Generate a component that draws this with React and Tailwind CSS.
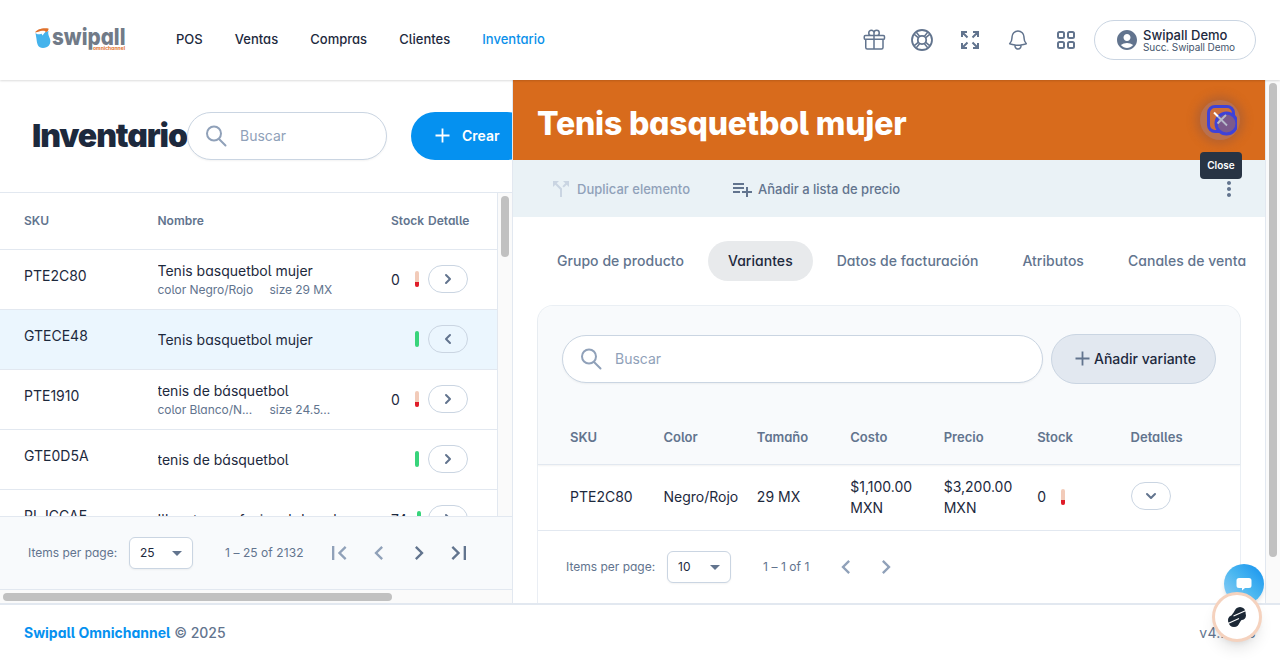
import React from "react";
import { HiOutlineGift, HiOutlineBell } from "react-icons/hi2";
import { HiChevronRight, HiChevronLeft, HiChevronDown } from "react-icons/hi";
import {
  MdAccountCircle, MdCallSplit, MdPlaylistAdd, MdMoreVert, MdArrowDropDown,
  MdFirstPage, MdLastPage, MdChevronLeft, MdChevronRight,
} from "react-icons/md";

const PLAIN = "[font-feature-settings:normal]";

function Logo() {
  return (
    <svg className="h-[28px] w-[96px] shrink-0 overflow-visible" viewBox="0 0 96 28">
      <path d="M1.500 7 C3 8.500 6 9 9 7 L14.500 5 C13.500 8 15 10 16 13 C17.500 18 14 22 9 22 C4 22 3 18 2.500 13 Z" fill="#45b3ec" />
      <path d="M1 6.500 C3 3 9 1.500 14.500 2.500 C15 4.500 13 5.500 11.500 6.500 C12 4 8 4.300 3.500 6 Z" fill="#e0712b" />
      <path d="M7 6.500 L8.500 9.500 L11.500 5.500 Z" fill="#fff" />
      <text x="18" y="18.500" textLength="73.500" lengthAdjust="spacingAndGlyphs" fontSize="23.500" fontWeight="800" fill="#717b88" className="[font-feature-settings:'cv11']">swipall</text>
      <text x="59" y="23.600" textLength="32" lengthAdjust="spacingAndGlyphs" fontSize="4.500" fontWeight="700" fill="#e0712b" className="[font-feature-settings:'cv11']">omnichannel</text>
    </svg>
  );
}

function SearchIcon() {
  return (
    <svg className="size-6 shrink-0 text-slate-400" viewBox="0 0 24 24" fill="none" stroke="currentColor" strokeWidth="2" strokeLinecap="round">
      <path d="M21.500 21.500l-6-6m1.500-6a7 7 0 11-14 0 7 7 0 0114 0z" />
    </svg>
  );
}

function LifebuoyIcon() {
  return (
    <svg className="size-6" viewBox="0 0 24 24" fill="none" stroke="currentColor" strokeWidth="1.800">
      <circle cx="12" cy="12" r="10" />
      <circle cx="12" cy="12" r="4.200" />
      <path d="M4.300 6.300l4.200 3.500M6.300 4.300l3.500 4.200M19.700 6.300l-4.200 3.500M17.700 4.300l-3.500 4.200M4.300 17.700l4.200-3.500M6.300 19.700l3.500-4.200M19.700 17.700l-4.200-3.500M17.700 19.700l-3.500-4.200" strokeWidth="1.500" />
    </svg>
  );
}

function ExpandIcon() {
  return (
    <svg className="size-6" viewBox="0 0 24 24" fill="none" stroke="currentColor" strokeWidth="2">
      <path d="M4 9V4h5M4 4l5.500 5.500M15 4h5v5M20 4l-5.500 5.500M4 15v5h5M4 20l5.500-5.500M20 15v5h-5M20 20l-5.500-5.500" />
    </svg>
  );
}

function Search({ className }) {
  return (
    <div className={`flex h-12 items-center rounded-full border border-slate-300 bg-white pl-4 shadow-xs ${className}`}>
      <SearchIcon />
      <span className={`ml-3 text-sm text-slate-400 ${PLAIN}`}>Buscar</span>
    </div>
  );
}

function Plus({ className }) {
  return (
    <svg className={className} viewBox="0 0 16 16" fill="none" stroke="currentColor" strokeWidth="1.800">
      <path d="M7.500 .5v14M.5 7.500h14" />
    </svg>
  );
}

function StockBar({ full }) {
  return full ? (
    <div className="h-4 w-1 rounded-xs bg-[#38d47b]" />
  ) : (
    <div className="flex h-4 w-1 flex-col justify-end overflow-hidden rounded-xs bg-[#f2cbb9]">
      <div className="h-[5px] bg-[#df1c29]" />
    </div>
  );
}

function Pill({ icon: Icon }) {
  return (
    <div className="flex h-7 w-10 items-center justify-center rounded-full border border-slate-300 text-slate-500">
      <Icon className="size-5" />
    </div>
  );
}

const NAV = ["POS", "Ventas", "Compras", "Clientes"];

const ROWS = [
  { sku: "PTE2C80", name: "Tenis basquetbol mujer", sub: ["color Negro/Rojo", "size 29 MX"], stock: "0" },
  { sku: "GTECE48", name: "Tenis basquetbol mujer", full: true, selected: true },
  { sku: "PTE1910", name: "tenis de básquetbol", sub: ["color Blanco/N...", "size 24.5..."], stock: "0" },
  { sku: "GTE0D5A", name: "tenis de básquetbol", full: true },
  { sku: "PLJCCAE", name: "Illuvetas profesional de color y mundo", stock: "74", full: true },
];

function Header() {
  return (
    <header className="relative z-20 flex h-20 shrink-0 items-center bg-white pl-[34px] pr-6 shadow-[0_1px_2px_rgba(0,0,0,0.14)]">
      <Logo />
      <nav className="ml-[46px] flex gap-8 text-[13px] font-medium tracking-[0.020px] text-slate-800">
        {NAV.map((n) => <span key={n}>{n}</span>)}
        <span className="text-[#0990ea]">Inventario</span>
      </nav>
      <div className="ml-auto flex items-center gap-6 text-slate-500">
        <HiOutlineGift className="size-6" />
        <LifebuoyIcon />
        <ExpandIcon />
        <HiOutlineBell className="size-6" />
        <svg className="size-6" viewBox="0 0 24 24" fill="none" stroke="currentColor" strokeWidth="2">
          <rect x="4" y="4" width="6" height="6" rx="1.500" /><rect x="14" y="4" width="6" height="6" rx="1.500" />
          <rect x="4" y="14" width="6" height="6" rx="1.500" /><rect x="14" y="14" width="6" height="6" rx="1.500" />
        </svg>
      </div>
      <div className={`ml-4 flex h-10 w-[162px] items-center rounded-full border border-slate-300 pl-5 ${PLAIN}`}>
        <MdAccountCircle className="size-6 shrink-0 text-slate-500" />
        <div className="ml-1 flex flex-col">
          <span className="text-[13px] leading-[14px] font-medium text-slate-800">Swipall Demo</span>
          <span className="text-[10px] leading-[11px] tracking-[-0.100px] text-slate-600">Succ. Swipall Demo</span>
        </div>
      </div>
    </header>
  );
}

function Row({ r }) {
  return (
    <div className={`grid h-[60px] shrink-0 grid-cols-[133.500px_233.500px_24px_13px_1fr] border-b border-slate-200 pl-6 text-sm text-slate-800 ${r.selected ? "bg-[#ebf6fe]" : ""}`}>
      <div className="pt-4 leading-5">{r.sku}</div>
      <div className="flex flex-col justify-center">
        <div className={`overflow-hidden leading-5 whitespace-nowrap ${r.sub ? "" : "pt-px"}`}>{r.name}</div>
        {r.sub && (
          <div className="flex gap-4 text-xs leading-[17px] tracking-[-0.050px] text-slate-500">
            <span className="w-24 whitespace-nowrap">{r.sub[0]}</span>
            <span>{r.sub[1]}</span>
          </div>
        )}
      </div>
      <div className="flex items-center">{r.stock}</div>
      <div className={`flex items-center pb-0.5 ${r.stock === "74" ? "pl-0.5" : ""}`}>
        <StockBar full={r.full} />
      </div>
      <div className="flex items-center pb-0.5">
        <Pill icon={r.selected ? HiChevronLeft : HiChevronRight} />
      </div>
    </div>
  );
}

function PageSize({ n }) {
  return (
    <div className="ml-3 flex h-8 w-16 items-center justify-between rounded-md border border-slate-300 bg-white pl-2.5 pr-[3px] text-xs text-slate-800 shadow-xs">
      {n}
      <MdArrowDropDown className="size-6 text-slate-500" />
    </div>
  );
}

function LeftPanel() {
  return (
    <section className="flex w-[513px] shrink-0 flex-col overflow-hidden border-r border-slate-200">
      <div className="flex h-[113px] shrink-0 items-center border-b border-slate-200 pl-8">
        <h1 className="w-[155px] shrink-0 text-[32px] leading-none font-black tracking-[-1.100px] text-slate-800">Inventario</h1>
        <Search className="w-[200px] shrink-0" />
        <div className={`ml-6 flex h-12 w-[120px] shrink-0 items-center rounded-full bg-[#0591f0] pl-6 text-sm font-semibold text-white ${PLAIN}`}>
          <Plus className="size-4" />
          <span className="ml-[11px]">Crear</span>
        </div>
      </div>
      <div className="flex h-[323px] shrink-0 overflow-hidden">
        <div className="flex w-[497px] flex-col">
          <div className="grid h-[57px] shrink-0 grid-cols-[133.500px_233.500px_37px_1fr] items-center border-b border-slate-200 pl-6 text-xs font-semibold text-slate-500">
            <span>SKU</span><span>Nombre</span><span>Stock</span><span>Detalle</span>
          </div>
          {ROWS.map((r) => <Row key={r.sku} r={r} />)}
        </div>
        <div className="flex w-[15px] justify-center border-l border-slate-200 bg-[#fafafa] pt-[3px]">
          <div className="h-[61px] w-2 rounded-full bg-[#c1c1c1]" />
        </div>
      </div>
      <div className="flex h-[74px] shrink-0 items-center border-y border-slate-200 bg-slate-50 pl-7 text-xs text-slate-500">
        <span className="w-[89px] whitespace-nowrap">Items per page:</span>
        <PageSize n="25" />
        <span className="ml-8 w-[88px] tracking-[0.070px] whitespace-nowrap">1 – 25 of 2132</span>
        <div className="ml-3 flex gap-3">
          <MdFirstPage className="size-7 text-slate-400" />
          <MdChevronLeft className="size-7 text-slate-400" />
          <MdChevronRight className="size-7 text-slate-500" />
          <MdLastPage className="size-7 text-slate-500" />
        </div>
      </div>
      <div className="flex flex-1 items-start bg-[#fafafa] pt-[3px] pl-[3px]">
        <div className="h-2 w-[389px] rounded-full bg-[#c1c1c1]" />
      </div>
    </section>
  );
}

const TABS = ["Grupo de producto", "Variantes", "Datos de facturación", "Atributos", "Canales de venta"];

function Detail() {
  return (
    <section className="flex flex-1 overflow-hidden">
      <div className="flex w-[752px] shrink-0 flex-col overflow-hidden">
        <div className="flex h-20 shrink-0 items-center justify-between bg-[#d86b1c] pr-[25px] pl-[25px]">
          <h2 className="-ml-px pt-2 text-[32px] leading-none font-extrabold tracking-[-0.200px] text-white">Tenis basquetbol mujer</h2>
          <div className="relative flex size-10 items-center justify-center rounded-full bg-[#b9704e] shadow-[0_0_10px_4px_rgba(120,80,80,0.35)]">
            <svg className="size-8 translate-x-px" viewBox="0 0 32 32" fill="none">
              <rect x="3.500" y="2.500" width="25" height="25" rx="6.500" fill="#cc6e3b" stroke="#3e42d8" strokeWidth="3" />
              <circle cx="21.500" cy="19.500" r="10.500" fill="#7b5a8c" stroke="#3e42d8" strokeWidth="3" />
              <path d="M9 8.500l4 4" stroke="#fff" strokeWidth="2" />
              <path d="M13 12.500l9 9M21 11l-8.500 8.500" stroke="#b6b9c9" strokeWidth="1.800" />
            </svg>
            <div className={`absolute top-[52px] left-0 flex h-[27px] w-[42px] items-center justify-center rounded bg-[#283444] text-[10px] font-semibold text-white ${PLAIN}`}>Close</div>
          </div>
        </div>
        <div className={`flex h-[57px] shrink-0 items-center bg-[#eaf2f6] pt-px pr-6 pl-9 text-[13px] font-medium text-slate-500 ${PLAIN}`}>
          <MdCallSplit className="size-6 text-slate-300" />
          <span className="ml-1 pt-0.5 text-slate-400">Duplicar elemento</span>
          <MdPlaylistAdd className="ml-10 size-6" />
          <span className="ml-1 pt-0.5">Añadir a lista de precio</span>
          <MdMoreVert className="ml-auto size-6" />
        </div>
        <div className="flex h-[88px] shrink-0 items-center gap-1 pl-6 text-sm font-medium tracking-[0.040px] text-slate-500">
          {TABS.map((t) => (
            <span key={t} className={`flex h-10 shrink-0 items-center rounded-full px-5 ${t === "Variantes" ? "bg-[#e8eaec] text-slate-800" : ""}`}>{t}</span>
          ))}
        </div>
        <div className="mr-6 ml-6 flex flex-1 flex-col rounded-t-2xl border border-b-0 border-slate-200/70">
          <div className="flex h-[159px] shrink-0 flex-col rounded-t-2xl border-b border-slate-200 bg-slate-50 px-6 pt-7 shadow-xs">
            <div className="flex h-[50px] items-center gap-2">
              <Search className="flex-1" />
              <div className={`flex h-[50px] w-[165px] items-center rounded-full border border-slate-300 bg-slate-200 pl-[23px] text-sm font-medium text-slate-800 ${PLAIN}`}>
                <Plus className="size-4 text-slate-500" />
                <span className="ml-[3px]">Añadir variante</span>
              </div>
            </div>
            <div className="-mr-2 grid flex-1 grid-cols-7 items-end pb-[18px] pl-2 text-[13px] leading-[18px] font-semibold text-slate-500">
              {["SKU", "Color", "Tamaño", "Costo", "Precio", "Stock", "Detalles"].map((h) => <span key={h}>{h}</span>)}
            </div>
          </div>
          <div className="grid h-[66px] shrink-0 grid-cols-7 items-center border-b border-slate-200 pr-4 pb-0.5 pl-8 text-sm leading-[21px] text-slate-800">
            <span>PTE2C80</span><span>Negro/Rojo</span><span>29 MX</span>
            <span className="w-[65px]">$1,100.00 MXN</span>
            <span className="w-[70px]">$3,200.00 MXN</span>
            <span className="flex items-center"><span className="w-6">0</span><StockBar /></span>
            <div className="pb-px"><Pill icon={HiChevronDown} /></div>
          </div>
          <div className="flex h-[72px] shrink-0 items-center pl-7 text-xs text-slate-500">
            <span className="w-[89px] whitespace-nowrap">Items per page:</span>
            <PageSize n="10" />
            <span className="ml-8 w-[51px] tracking-[0.070px] whitespace-nowrap">1 – 1 of 1</span>
            <div className="ml-[18px] flex gap-3 text-slate-400">
              <MdChevronLeft className="size-7" />
              <MdChevronRight className="size-7" />
            </div>
          </div>
        </div>
      </div>
      <div className="flex flex-1 justify-center border-l border-slate-200 bg-[#fafafa] pt-[3px]">
        <div className="h-[474px] w-2 rounded-full bg-[#c1c1c1]" />
      </div>
    </section>
  );
}

export default function App() {
  return (
    <div className="relative flex h-[660px] w-[1280px] flex-col overflow-hidden bg-white font-['Inter',sans-serif] [font-feature-settings:'cv11','cv05']">
      <Header />
      <main className="flex h-[523px] shrink-0">
        <LeftPanel />
        <Detail />
      </main>
      <footer className="flex flex-1 items-center justify-between border-t-2 border-slate-200 pr-6 pl-6 text-sm font-medium text-slate-500">
        <span><b className="font-bold text-[#0591f0]">Swipall Omnichannel</b> © 2025</span>
        <span className="font-normal tracking-[0.250px]">v4.20.13</span>
      </footer>
      <div className="absolute top-[564px] left-[1224px] z-30 flex size-10 items-center justify-center rounded-full bg-linear-to-tr from-[#91cff5] via-[#4ab7f0] to-[#0790ee] shadow-md">
        <svg className="size-4" viewBox="0 0 16 16" fill="#fff"><path d="M3 2h10a2.500 2.500 0 012.500 2.500v5A2.500 2.500 0 0113 12H9l-3 2.500V12H3A2.500 2.500 0 01.500 9.500v-5A2.500 2.500 0 013 2z" /></svg>
      </div>
      <div className="absolute top-[592px] left-[1212px] z-30 flex size-[50px] items-center justify-center rounded-full border-[3px] border-[#f5d2be] bg-white shadow-lg">
        <svg className="size-6" viewBox="0 0 24 24">
          <g fill="#1c2836">
            <circle cx="15" cy="7.500" r="5.500" /><circle cx="9" cy="16.500" r="5.500" />
            <path d="M10 5.500L4 14L14 18.500L20 10Z" />
            <circle cx="16.500" cy="10.500" r="4.500" /><circle cx="7.500" cy="15" r="4.500" />
          </g>
          <path d="M8.500 11L21 5.500M3 18.500L14 13.500" stroke="#fff" strokeWidth="1.200" />
        </svg>
      </div>
    </div>
  );
}
